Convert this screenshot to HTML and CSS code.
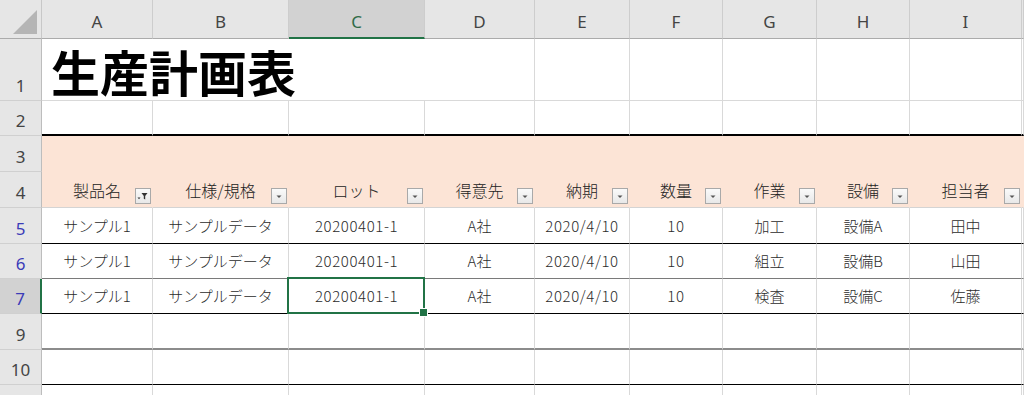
FILE: index.html
```html
<!DOCTYPE html>
<html lang="ja">
<head>
    <meta charset="UTF-8">
    <meta name="viewport" content="width=device-width, initial-scale=1.0">
    <title>生産計画表</title>
    <link rel="stylesheet" href="styles.css">
</head>
<body>
    <div class="sheet">
        <!-- column letters -->
        <div class="row col-head">
            <div class="corner"><span class="corner-tri"></span></div>
            <div class="ch">A</div>
            <div class="ch">B</div>
            <div class="ch active">C</div>
            <div class="ch">D</div>
            <div class="ch">E</div>
            <div class="ch">F</div>
            <div class="ch">G</div>
            <div class="ch">H</div>
            <div class="ch">I</div>
            <div class="ch"></div>
        </div>

        <div class="row r1">
            <div class="rh">1</div>
            <div class="c title">生産計画表</div>
            <div class="c"></div><div class="c"></div><div class="c"></div>
            <div class="c"></div><div class="c"></div><div class="c"></div>
        </div>

        <div class="row r2">
            <div class="rh">2</div>
            <div class="c"></div><div class="c"></div><div class="c"></div><div class="c"></div><div class="c"></div>
            <div class="c"></div><div class="c"></div><div class="c"></div><div class="c"></div><div class="c"></div>
        </div>

        <div class="row r3 band">
            <div class="rh">3</div>
            <div class="c"></div><div class="c"></div><div class="c"></div><div class="c"></div><div class="c"></div>
            <div class="c"></div><div class="c"></div><div class="c"></div><div class="c"></div><div class="c"></div>
        </div>

        <div class="row r4 band">
            <div class="rh">4</div>
            <div class="c hd">製品名<span class="fbtn">
                <svg width="16" height="16" viewBox="0 0 16 16"><path d="M6.5 5h6l-2.3 3v3.5l-1.4-0.8V8z" fill="#333"/><path d="M2.5 9.5h3l-1.5 1.8z" fill="#333"/></svg>
            </span></div>
            <div class="c hd">仕様/規格<span class="fbtn"><svg width="16" height="16" viewBox="0 0 16 16"><path d="M5.5 7.5h5l-2.5 2.5z" fill="#555"/></svg></span></div>
            <div class="c hd">ロット<span class="fbtn"><svg width="16" height="16" viewBox="0 0 16 16"><path d="M5.5 7.5h5l-2.5 2.5z" fill="#555"/></svg></span></div>
            <div class="c hd">得意先<span class="fbtn"><svg width="16" height="16" viewBox="0 0 16 16"><path d="M5.5 7.5h5l-2.5 2.5z" fill="#555"/></svg></span></div>
            <div class="c hd">納期<span class="fbtn"><svg width="16" height="16" viewBox="0 0 16 16"><path d="M5.5 7.5h5l-2.5 2.5z" fill="#555"/></svg></span></div>
            <div class="c hd">数量<span class="fbtn"><svg width="16" height="16" viewBox="0 0 16 16"><path d="M5.5 7.5h5l-2.5 2.5z" fill="#555"/></svg></span></div>
            <div class="c hd">作業<span class="fbtn"><svg width="16" height="16" viewBox="0 0 16 16"><path d="M5.5 7.5h5l-2.5 2.5z" fill="#555"/></svg></span></div>
            <div class="c hd">設備<span class="fbtn"><svg width="16" height="16" viewBox="0 0 16 16"><path d="M5.5 7.5h5l-2.5 2.5z" fill="#555"/></svg></span></div>
            <div class="c hd">担当者<span class="fbtn"><svg width="16" height="16" viewBox="0 0 16 16"><path d="M5.5 7.5h5l-2.5 2.5z" fill="#555"/></svg></span></div>
            <div class="c"></div>
        </div>

        <div class="row r5">
            <div class="rh filtered">5</div>
            <div class="c">サンプル1</div>
            <div class="c">サンプルデータ</div>
            <div class="c num">20200401-1</div>
            <div class="c">A社</div>
            <div class="c num">2020/4/10</div>
            <div class="c num">10</div>
            <div class="c">加工</div>
            <div class="c">設備A</div>
            <div class="c">田中</div>
            <div class="c"></div>
        </div>

        <div class="row r6">
            <div class="rh filtered">6</div>
            <div class="c">サンプル1</div>
            <div class="c">サンプルデータ</div>
            <div class="c num">20200401-1</div>
            <div class="c">A社</div>
            <div class="c num">2020/4/10</div>
            <div class="c num">10</div>
            <div class="c">組立</div>
            <div class="c">設備B</div>
            <div class="c">山田</div>
            <div class="c"></div>
        </div>

        <div class="row r7">
            <div class="rh filtered active">7</div>
            <div class="c">サンプル1</div>
            <div class="c">サンプルデータ</div>
            <div class="c num selected">20200401-1</div>
            <div class="c">A社</div>
            <div class="c num">2020/4/10</div>
            <div class="c num">10</div>
            <div class="c">検査</div>
            <div class="c">設備C</div>
            <div class="c">佐藤</div>
            <div class="c"></div>
        </div>

        <div class="row r9">
            <div class="rh">9</div>
            <div class="c"></div><div class="c"></div><div class="c"></div><div class="c"></div><div class="c"></div>
            <div class="c"></div><div class="c"></div><div class="c"></div><div class="c"></div><div class="c"></div>
        </div>

        <div class="row r10">
            <div class="rh">10</div>
            <div class="c"></div><div class="c"></div><div class="c"></div><div class="c"></div><div class="c"></div>
            <div class="c"></div><div class="c"></div><div class="c"></div><div class="c"></div><div class="c"></div>
        </div>

        <div class="row r11">
            <div class="rh">11</div>
            <div class="c"></div><div class="c"></div><div class="c"></div><div class="c"></div><div class="c"></div>
            <div class="c"></div><div class="c"></div><div class="c"></div><div class="c"></div><div class="c"></div>
        </div>
    </div>
</body>
</html>
```

FILE: styles.css
```css
* {
    box-sizing: border-box;
}
body {
    margin: 0;
    background: #fff;
    height: 395px;
    overflow: hidden;
    font-family: "Noto Sans CJK JP", sans-serif;
}
.sheet {
    width: 1024px;
}
.row {
    display: grid;
    grid-template-columns: 42px 111px 136px 136px 110px 95px 93px 94px 93px 112px 1fr;
}

/* column letters */
.col-head {
    height: 39px;
    background: #e6e6e6;
}
.corner {
    position: relative;
    border-right: 1px solid #c8c8c8;
    border-bottom: 1px solid #ababab;
}
.corner-tri {
    position: absolute;
    right: 4px;
    bottom: 4px;
    width: 0;
    height: 0;
    border-left: 24px solid transparent;
    border-bottom: 24px solid #b5b5b5;
}
.ch {
    display: flex;
    align-items: center;
    justify-content: center;
    padding-top: 6px;
    font-family: "Noto Sans", sans-serif;
    font-size: 17px;
    line-height: 20px;
    color: #444;
    border-right: 1px solid #cdcdcd;
    border-bottom: 1px solid #ababab;
}
.ch.active {
    background: #d2d2d2;
    color: #2f6b48;
    border-bottom: 2px solid #217346;
}

/* row numbers */
.rh {
    display: flex;
    align-items: flex-end;
    justify-content: center;
    padding-bottom: 4px;
    background: #e6e6e6;
    font-family: "Noto Sans", sans-serif;
    font-size: 17px;
    line-height: 20px;
    color: #444;
    border-right: 1px solid #bdbdbd;
    border-bottom: 1px solid #d0d0d0;
}
.rh.filtered {
    color: #3b3bb8;
}
.rh.active {
    background: #d2d2d2;
    border-right: 2px solid #217346;
}

/* cells */
.c {
    position: relative;
    display: flex;
    align-items: flex-end;
    justify-content: center;
    padding-bottom: 7px;
    font-size: 15px;
    font-weight: 300;
    line-height: 20px;
    color: #2b2b2b;
    white-space: nowrap;
    border-right: 1px solid #d9d9d9;
    border-bottom: 1px solid #d9d9d9;
}
.num {
    letter-spacing: 0.6px;
}

.r1 { height: 62px; }
.r2 { height: 35px; }
.r3 { height: 36px; }
.r4 { height: 36px; }
.r5 { height: 36px; }
.r6 { height: 35px; }
.r7 { height: 35px; }
.r9 { height: 36px; }
.r10 { height: 35px; }
.r11 { height: 35px; }

.title {
    grid-column: span 4;
    justify-content: flex-start;
    padding-left: 9px;
    padding-bottom: 4px;
    font-size: 49px;
    line-height: 50px;
    font-weight: bold;
    color: #000;
}

.r2 .c { border-bottom: 2px solid #000; }

.band .c {
    background: #fce4d6;
    border-right-color: #fce4d6;
}
.r3 .c { border-bottom-color: #fce4d6; }
.r4 .c { border-bottom-color: #d4d4d4; }
.hd {
    font-size: 16px;
    color: #222;
}

.r5 .c { border-bottom-color: #000; }
.r6 .c { border-bottom-color: #7a7a7a; }
.r7 .c { border-bottom-color: #000; }
.r9 .c { border-bottom: 2px solid #8c8c8c; }
.r10 .c { border-bottom-color: #000; }

/* filter dropdown buttons */
.fbtn {
    position: absolute;
    right: 1px;
    bottom: 3px;
    width: 16px;
    height: 16px;
    border: 1px solid #a9a9a9;
    background: linear-gradient(#fafafa, #e8e8e8);
    display: flex;
    align-items: center;
    justify-content: center;
}
.fbtn svg {
    display: block;
    flex: none;
}

/* active cell */
.selected::after {
    content: "";
    position: absolute;
    left: -2px;
    top: -2px;
    right: -1px;
    bottom: -1px;
    border: 2px solid #217346;
}
.selected::before {
    content: "";
    position: absolute;
    right: -4px;
    bottom: -4px;
    width: 7px;
    height: 7px;
    background: #217346;
    border: 1px solid #fff;
    z-index: 2;
}
```
